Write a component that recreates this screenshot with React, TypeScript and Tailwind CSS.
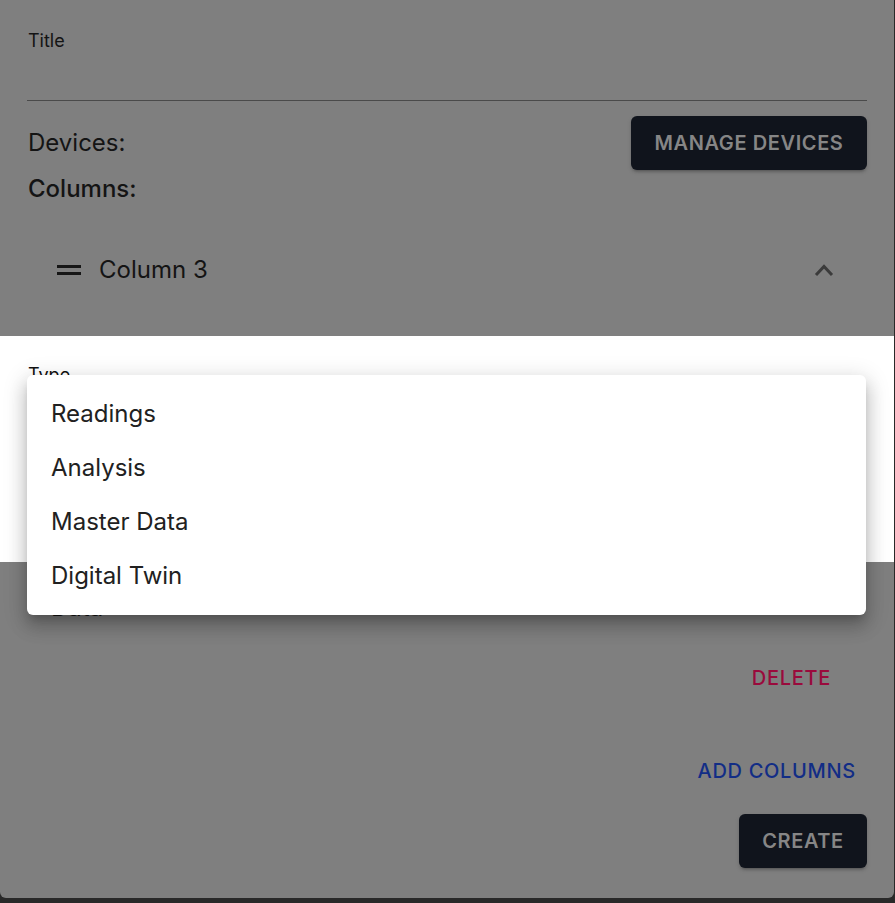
const menuItems = ['Readings', 'Analysis', 'Master Data', 'Digital Twin'];

const DragHandle = () => (
    <svg width="24" height="12" viewBox="0 0 24 12" className="shrink-0">
        <rect x="0" y="1" width="24" height="3" fill="#161616" />
        <rect x="0" y="8" width="24" height="3" fill="#161616" />
    </svg>
);

const ChevronUp = () => (
    <svg width="20" height="14" viewBox="0 0 20 14">
        <polyline points="2,12 10,3.5 18,12" fill="none" stroke="#3b3b3b" strokeWidth="3" />
    </svg>
);

const App = () => {
    return (
        <div className="relative h-[903px] w-[895px] overflow-hidden bg-[#292929] font-['Inter','Noto_Sans',sans-serif]">
            <div className="flex h-[898px] w-[894px] flex-col rounded-b-md bg-[#7f7f7f] pt-[29px] text-[#141414]">
                <div className="px-[27px]">
                    <div className="flex h-[72px] flex-col border-b border-[#4a4a4a]">
                        <span className="pl-[1px] text-[18px] leading-[24px]">Title</span>
                    </div>
                    <div className="mt-[15px] flex h-[54px] items-center justify-between">
                        <span className="pl-[1px] text-[24px] leading-[36px]">Devices:</span>
                        <button className="flex h-[54px] w-[236px] items-center justify-center rounded-md bg-[#10141c] text-[20px] font-semibold uppercase tracking-[0.03em] text-[#868686] shadow-[0_3px_3px_-2px_rgba(0,0,0,0.25),0_2px_4px_0_rgba(0,0,0,0.15)]">
                            Manage Devices
                        </button>
                    </div>
                    <p className="mt-[1px] pl-[1px] text-[24px] font-medium leading-[36px]">Columns:</p>
                    <div className="mt-[27px] flex h-[72px] items-center pl-[30px] pr-[33px]">
                        <DragHandle />
                        <span className="ml-[18px] text-[24px] leading-[36px]">Column 3</span>
                        <div className="ml-auto flex items-center">
                            <ChevronUp />
                        </div>
                    </div>
                </div>

                <div className="mt-[30px] h-[226px] w-full bg-white px-[28px] pt-[27px]">
                    <span className="text-[18px] leading-[24px] text-[#111]">Type</span>
                </div>

                <div className="px-[27px]">
                    <p className="mt-[28px] pl-[24px] text-[24px] leading-[36px]">Data</p>
                    <div className="mt-[25px] flex justify-end pr-[24px]">
                        <button className="flex h-[54px] items-center px-[12px] text-[20px] font-medium uppercase tracking-[0.035em] text-[#9a0a3c]">
                            Delete
                        </button>
                    </div>
                    <div className="mt-[39px] flex justify-end">
                        <button className="flex h-[54px] items-center px-[11px] text-[20px] font-medium uppercase tracking-[0.035em] text-[#122d86]">
                            Add Columns
                        </button>
                    </div>
                    <div className="mt-[16px] flex justify-end">
                        <button className="flex h-[54px] w-[128px] items-center justify-center rounded-md bg-[#10141c] text-[20px] font-semibold uppercase tracking-[0.03em] text-[#868686] shadow-[0_3px_3px_-2px_rgba(0,0,0,0.25),0_2px_4px_0_rgba(0,0,0,0.15)]">
                            Create
                        </button>
                    </div>
                </div>
            </div>

            <ul className="absolute left-[27px] top-[375px] w-[839px] rounded-md bg-white py-[12px] shadow-[0_7px_8px_-4px_rgba(0,0,0,0.2),0_12px_17px_2px_rgba(0,0,0,0.14),0_5px_22px_4px_rgba(0,0,0,0.12)]">
                {menuItems.map((item) => (
                    <li key={item} className="flex h-[54px] items-center px-[24px] text-[24px] leading-[36px] text-[#212121]">
                        {item}
                    </li>
                ))}
            </ul>
        </div>
    );
};

export default App;
